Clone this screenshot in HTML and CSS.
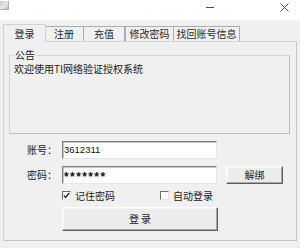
FILE: index.html
```html
<!DOCTYPE html>
<html lang="zh-CN">
<head>
<meta charset="utf-8">
<title>登录</title>
<link rel="stylesheet" href="styles.css">
</head>
<body>
<div class="window">
  <div class="titlebar">
    <span class="app-icon"></span>
    <span class="spacer"></span>
    <svg class="tb-min" width="8" height="8" viewBox="0 0 8 8"><rect x="0" y="4" width="8" height="1" fill="#4a4a4a"/></svg>
    <svg class="tb-close" width="9" height="9" viewBox="0 0 9 9"><path d="M0.5 0.5 L8.5 8.5 M8.5 0.5 L0.5 8.5" stroke="#4a4a4a" stroke-width="1" fill="none"/></svg>
  </div>
  <div class="tabs">
    <div class="tab active">登录</div>
    <div class="tab">注册</div>
    <div class="tab">充值</div>
    <div class="tab">修改密码</div>
    <div class="tab">找回账号信息</div>
  </div>
  <div class="panel">
    <fieldset class="group">
      <legend>公告</legend>
      <div class="notice">欢迎使用TI网络验证授权系统</div>
    </fieldset>
    <div class="form">
      <div class="row r1">
        <span class="lbl">账号：</span>
        <div class="input">3612311</div>
      </div>
      <div class="row r2">
        <span class="lbl">密码：</span>
        <div class="input pwd">*******</div>
        <button class="btn unbind">解绑</button>
      </div>
      <div class="row r3 indent">
        <div class="check first">
          <span class="box"><svg width="7" height="7" viewBox="0 0 7 7"><path d="M0.8 3.4 L2.6 5.4 L6.3 1" stroke="#222" stroke-width="1.4" fill="none"/></svg></span>
          <span class="ctext">记住密码</span>
        </div>
        <div class="check">
          <span class="box"></span>
          <span class="ctext">自动登录</span>
        </div>
      </div>
      <div class="row r4 indent">
        <button class="btn login">登 录</button>
      </div>
    </div>
  </div>
</div>
</body>
</html>
```

FILE: styles.css
```css
html, body {
  margin: 0;
  padding: 0;
}
body {
  width: 300px;
  height: 248px;
  overflow: hidden;
  background: #f0f0f0;
  font-family: "Noto Sans CJK SC", "Noto Sans", sans-serif;
  font-size: 10px;
  color: #1a1a1a;
}
.window {
  width: 300px;
  height: 248px;
  background: #f0f0f0;
}
.titlebar {
  height: 20px;
  background: #ffffff;
  display: flex;
  align-items: flex-start;
}
.app-icon {
  width: 8px;
  height: 8px;
  margin-top: 1px;
  background: linear-gradient(135deg, #c9ced6 0%, #e3e6ea 60%, #b8bcc4 100%);
  border-right: 1px solid #b0b0b0;
  border-bottom: 1px solid #b0b0b0;
}
.spacer { flex: 1; }
.tb-min {
  margin-top: 3px;
  margin-right: 66px;
}
.tb-close {
  margin-top: 3px;
  margin-right: 11px;
}
.tabs {
  display: flex;
  align-items: flex-end;
  height: 17px;
  margin-top: 4px;
  padding-left: 3px;
  position: relative;
  z-index: 2;
}
.tab {
  box-sizing: border-box;
  height: 15px;
  line-height: 13px;
  text-align: center;
  background: #f0f0f0;
  border: 1px solid #acacac;
  border-bottom: none;
  margin-right: -1px;
  white-space: nowrap;
  color: #2a2a2a;
}
.tab.active {
  height: 18px;
  line-height: 17px;
  margin-bottom: -1px;
  background: #f0f0f0;
  border-color: #d2d2d2;
  position: relative;
  z-index: 3;
}
.tab:nth-child(1) { width: 43px; }
.tab:nth-child(2) { width: 40px; margin-left: -1px; }
.tab:nth-child(3) { width: 42px; }
.tab:nth-child(4) { width: 49px; margin-left: 1px; }
.tab:nth-child(5) { width: 67px; }
.panel {
  box-sizing: border-box;
  width: 294px;
  height: 200px;
  margin-left: 3px;
  border: 1px solid #d4d4d4;
  border-right-color: #c4c4c4;
  border-bottom-color: #c4c4c4;
  background: #f0f0f0;
  position: relative;
  z-index: 1;
}
.group {
  box-sizing: border-box;
  width: 281px;
  height: 85px;
  margin: 7px 0 0 5px;
  padding: 0 5px 0 4px;
  border: 1px solid #d5d5d5;
  border-right-color: #bdbdbd;
  border-bottom-color: #bdbdbd;
}
.group legend {
  padding: 0 1px;
  line-height: 12px;
  font-size: 10px;
}
.notice {
  margin-top: 2px;
  line-height: 12px;
  white-space: nowrap;
}
.form {
  display: flex;
  flex-direction: column;
  margin-top: 7px;
}
.row {
  display: flex;
  align-items: center;
}
.r1, .r2 { height: 18px; }
.r2 { margin-top: 7px; }
.r3 { height: 23px; }
.r4 { height: 24px; }
.indent { padding-left: 58px; }
.lbl {
  box-sizing: border-box;
  width: 58px;
  padding-right: 5px;
  text-align: right;
  line-height: 12px;
  white-space: nowrap;
}
.input {
  box-sizing: border-box;
  width: 155px;
  height: 18px;
  background: #ffffff;
  border: 1px solid;
  border-color: #7f7f7f #e6e6e6 #e6e6e6 #7f7f7f;
  box-shadow: inset 1px 1px 0 #c6c6c6;
  padding-left: 1px;
  font-family: "Liberation Sans", Arial, sans-serif;
  font-size: 9.5px;
  line-height: 16px;
  color: #111;
}
.input.pwd {
  font-family: "Liberation Sans", Arial, sans-serif;
  font-size: 12px;
  font-weight: bold;
  letter-spacing: 1.4px;
  line-height: 20px;
}
.btn {
  box-sizing: border-box;
  margin: 0;
  padding: 0;
  font-family: "Noto Sans CJK SC", "Noto Sans", sans-serif;
  font-size: 10px;
  color: #1a1a1a;
  background: #ececec;
  border: 1px solid;
  border-color: #ffffff #5e5e5e #5e5e5e #ffffff;
  box-shadow: inset -1px -1px 0 #a8a8a8, inset 1px 1px 0 #f6f6f6;
  line-height: 12px;
}
.unbind {
  width: 57px;
  height: 18px;
  margin-left: 9px;
}
.login {
  width: 156px;
  height: 24px;
}
.check {
  display: flex;
  align-items: center;
}
.check.first { width: 98px; }
.box {
  box-sizing: border-box;
  width: 9px;
  height: 9px;
  background: #ffffff;
  border: 1px solid;
  border-color: #6e6e6e #e4e4e4 #e4e4e4 #6e6e6e;
  display: flex;
  align-items: center;
  justify-content: center;
}
.box svg { display: block; }
.ctext {
  margin-left: 4px;
  line-height: 12px;
  white-space: nowrap;
}
```
